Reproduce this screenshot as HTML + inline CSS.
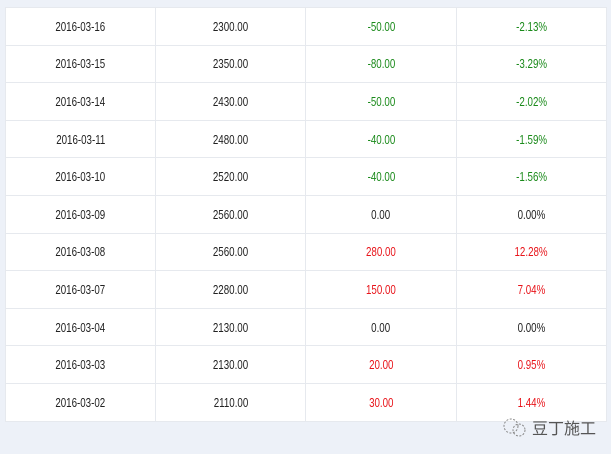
<!DOCTYPE html>
<html><head><meta charset="utf-8"><style>
html,body{margin:0;padding:0;width:611px;height:454px;background:#edf1f8;overflow:hidden}
table{position:absolute;left:5px;top:7px;width:602px;border-collapse:collapse;background:#fff;font-family:"Liberation Sans Narrow","Liberation Sans",sans-serif;font-size:13px;color:#222}
td{border:1px solid #e6e9ee;height:36.6px;padding:0;text-align:center;width:150px}
td span{display:inline-block;transform:scaleX(0.75)}
.g{color:#1a8a1a}.r{color:#e8141a}
.wm{position:absolute;top:415px;font-family:"Noto Sans CJK SC",sans-serif;font-size:16px;color:#555}
</style></head><body>
<table>
<tr><td><span>2016-03-16</span></td><td><span>2300.00</span></td><td class="g"><span>-50.00</span></td><td class="g"><span>-2.13%</span></td></tr>
<tr><td><span>2016-03-15</span></td><td><span>2350.00</span></td><td class="g"><span>-80.00</span></td><td class="g"><span>-3.29%</span></td></tr>
<tr><td><span>2016-03-14</span></td><td><span>2430.00</span></td><td class="g"><span>-50.00</span></td><td class="g"><span>-2.02%</span></td></tr>
<tr><td><span>2016-03-11</span></td><td><span>2480.00</span></td><td class="g"><span>-40.00</span></td><td class="g"><span>-1.59%</span></td></tr>
<tr><td><span>2016-03-10</span></td><td><span>2520.00</span></td><td class="g"><span>-40.00</span></td><td class="g"><span>-1.56%</span></td></tr>
<tr><td><span>2016-03-09</span></td><td><span>2560.00</span></td><td><span>0.00</span></td><td><span>0.00%</span></td></tr>
<tr><td><span>2016-03-08</span></td><td><span>2560.00</span></td><td class="r"><span>280.00</span></td><td class="r"><span>12.28%</span></td></tr>
<tr><td><span>2016-03-07</span></td><td><span>2280.00</span></td><td class="r"><span>150.00</span></td><td class="r"><span>7.04%</span></td></tr>
<tr><td><span>2016-03-04</span></td><td><span>2130.00</span></td><td><span>0.00</span></td><td><span>0.00%</span></td></tr>
<tr><td><span>2016-03-03</span></td><td><span>2130.00</span></td><td class="r"><span>20.00</span></td><td class="r"><span>0.95%</span></td></tr>
<tr><td><span>2016-03-02</span></td><td><span>2110.00</span></td><td class="r"><span>30.00</span></td><td class="r"><span>1.44%</span></td></tr>
</table>
<svg style="position:absolute;left:502px;top:418px" width="26" height="20" viewBox="0 0 26 20"><circle cx="9" cy="8" r="7" fill="none" stroke="#888" stroke-dasharray="2 1.5"/><circle cx="17" cy="12" r="6" fill="none" stroke="#888" stroke-dasharray="2 1.5"/></svg>
<div class="wm" style="left:532px">豆丁施工</div>
</body></html>
